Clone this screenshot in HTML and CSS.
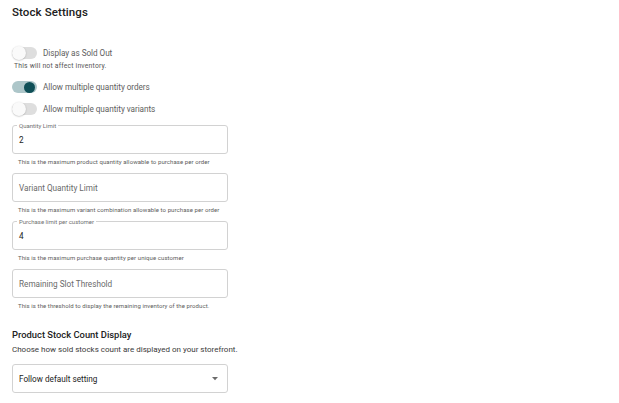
FILE: index.html
```html
<!DOCTYPE html>
<html>
<head>
<meta charset="utf-8">
<link rel="stylesheet" href="styles.css">
</head>
<body>
<div class="page">
  <h1 class="title">Stock Settings</h1>

  <div class="toggles">
    <div class="toggle-group">
      <label class="toggle-row">
        <span class="switch"><span class="track"></span><span class="thumb"></span></span>
        <span class="toggle-label">Display as Sold Out</span>
      </label>
      <div class="toggle-help">This will not affect inventory.</div>
    </div>
    <label class="toggle-row on">
      <span class="switch"><span class="track"></span><span class="thumb"></span></span>
      <span class="toggle-label">Allow multiple quantity orders</span>
    </label>
    <label class="toggle-row">
      <span class="switch"><span class="track"></span><span class="thumb"></span></span>
      <span class="toggle-label">Allow multiple quantity variants</span>
    </label>
  </div>

  <div class="fields">
    <div class="field">
      <div class="box filled">
        <span class="legend">Quantity Limit</span>
        <span class="value">2</span>
      </div>
      <div class="helper">This is the maximum product quantity allowable to purchase per order</div>
    </div>
    <div class="field">
      <div class="box">
        <span class="placeholder">Variant Quantity Limit</span>
      </div>
      <div class="helper">This is the maximum variant combination allowable to purchase per order</div>
    </div>
    <div class="field">
      <div class="box filled">
        <span class="legend">Purchase limit per customer</span>
        <span class="value">4</span>
      </div>
      <div class="helper">This is the maximum purchase quantity per unique customer</div>
    </div>
    <div class="field">
      <div class="box">
        <span class="placeholder">Remaining Slot Threshold</span>
      </div>
      <div class="helper">This is the threshold to display the remaining inventory of the product.</div>
    </div>
  </div>

  <h2 class="subtitle">Product Stock Count Display</h2>
  <p class="desc">Choose how sold stocks count are displayed on your storefront.</p>
  <div class="box select">
    <span class="value">Follow default setting</span>
    <svg class="caret" width="6" height="4" viewBox="0 0 6 4"><path d="M0 0h6L3 3.2z" fill="#6b6b6b"/></svg>
  </div>
</div>
</body>
</html>
```
FILE: styles.css
```css
* { box-sizing: border-box; }
html, body { margin: 0; padding: 0; background: #fff; }
body { font-family: Roboto, "Noto Sans", sans-serif; color: #212121; }
.page { padding: 5px 12px 0 12px; width: 619px; }
.title { margin: 0; font-size: 11.5px; font-weight: 500; line-height: 14px; color: #202020; letter-spacing: 0.1px; }

.toggles { margin-top: 27px; display: flex; flex-direction: column; gap: 8px; }
.toggle-group { display: flex; flex-direction: column; }
.toggle-row { display: flex; align-items: center; gap: 6px; height: 14px; }
.switch { position: relative; width: 25px; height: 14px; flex: none; }
.track { position: absolute; left: 0; top: 1px; width: 25px; height: 12px; border-radius: 6px; background: #dedede; }
.thumb { position: absolute; left: 0; top: 0; width: 14px; height: 14px; border-radius: 50%; background: #fafafa; box-shadow: 0 0.5px 1.5px rgba(0,0,0,0.28); }
.on .track { background: #adc6c9; }
.on .thumb { left: 12px; top: 1.5px; width: 11px; height: 11px; background: #0f4f57; box-shadow: none; }
.toggle-label { font-size: 8.2px; color: #5e5e5e; letter-spacing: -0.05px; }
.toggle-help { font-size: 6.8px; line-height: 7px; letter-spacing: 0.2px; color: #555; margin: 3px 0 2px 2px; }

.fields { margin-top: 9px; display: flex; flex-direction: column; gap: 8px; }
.field { display: flex; flex-direction: column; }
.box { position: relative; width: 216px; height: 29px; border: 1px solid #d2d2d2; border-radius: 3px; display: flex; align-items: center; padding: 0 6px; }
.legend { position: absolute; left: 4px; top: -4px; font-size: 6px; line-height: 7px; padding: 0 2px; background: #fff; color: #707070; }
.value { font-size: 8.2px; color: #222; }
.placeholder { font-size: 8.2px; color: #6a6a6a; }
.helper { font-size: 6px; letter-spacing: 0.08px; color: #5c5c5c; margin: 4px 0 0 6px; line-height: 7px; }

.subtitle { margin: 20px 0 0; font-size: 9.4px; font-weight: 500; line-height: 12px; color: #222; }
.desc { margin: 4px 0 0; font-size: 8px; line-height: 10px; color: #3a3a3a; }
.select { margin-top: 9px; justify-content: space-between; padding-right: 9px; }
.caret { display: block; }
```
